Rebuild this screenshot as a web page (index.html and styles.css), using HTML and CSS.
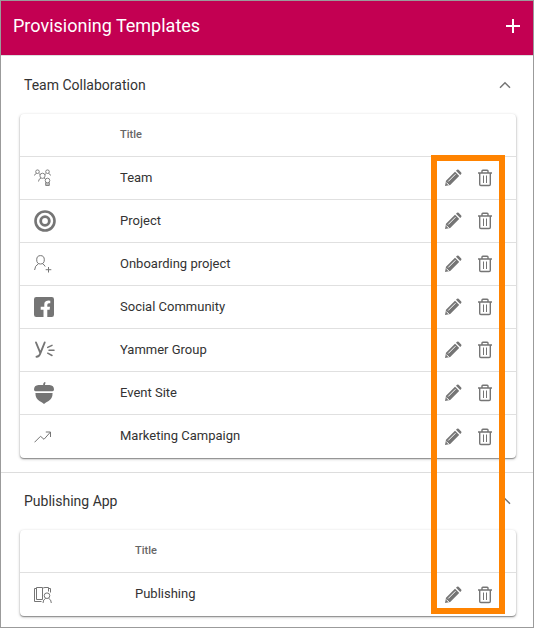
FILE: index.html
```html
<!DOCTYPE html>
<html lang="en">
<head>
<meta charset="utf-8">
<title>Provisioning Templates</title>
<link rel="stylesheet" href="styles.css">
</head>
<body>
<svg class="defs" aria-hidden="true">
  <symbol id="pencil" viewBox="0 0 18 18">
    <path fill="currentColor" d="M1 17l1-5.200L11.200 2.600l4.200 4.200L6.200 16zM12 1.800l1-1q.8-.6 1.600 0l2.600 2.600q.6.800 0 1.600l-1 1z"/>
    <path stroke="#fff" stroke-width="1" fill="none" d="M4.200 12.500L11.500 5.200M2.300 13.500l2.500 2.500M10.800 2l5.200 5.200"/>
  </symbol>
  <symbol id="trash" viewBox="0 0 16 18">
    <path fill="none" stroke="currentColor" stroke-width="1.400" d="M1 4h14M5 4V2q0-.8.800-.8h4.400q.8 0 .8.800v2M2.700 4v11.300q0 1.200 1.200 1.200h8.200q1.200 0 1.200-1.200V4"/>
    <path fill="none" stroke="currentColor" stroke-width="1" d="M6.500 6.500v7.500M9.500 6.500v7.500"/>
  </symbol>
  <symbol id="chevron" viewBox="0 0 12 8">
    <path fill="none" stroke="currentColor" stroke-width="1.500" d="M1 6.700l5-5 5 5"/>
  </symbol>
</svg>
<div class="panel">
  <header class="bar">
    <h1>Provisioning Templates</h1>
    <button class="icon-button add" aria-label="Add template">
      <svg width="14" height="14" viewBox="0 0 14 14"><path stroke="currentColor" stroke-width="2" d="M7 0v14M0 7h14"/></svg>
    </button>
  </header>
  <main>
    <section class="group">
      <div class="group-head">
        <h2>Team Collaboration</h2>
        <button class="icon-button" aria-label="Collapse Team Collaboration" aria-expanded="true"><svg width="12" height="8"><use href="#chevron"/></svg></button>
      </div>
      <table class="card">
        <thead><tr><th class="kind"></th><th>Title</th><th class="actions"></th></tr></thead>
        <tbody>
          <tr>
            <td class="kind"><svg width="18" height="18" viewBox="0 0 18 18" fill="none" stroke="currentColor" stroke-width=".9"><circle cx="3.500" cy="2.700" r="1.800"/><circle cx="13.500" cy="2.700" r="1.800"/><path d="M.5 6.500q.3-1.800 2-2M16.500 6.500q-.3-1.800-2-2M5 4.700l1.200.8M12 4.700l-1.200.8"/><circle cx="8.500" cy="6.800" r="2.600"/><path d="M4.500 12.500q.2-2.700 2.500-3.500M10 9l1.300.8"/><circle cx="13.500" cy="11.500" r="2.300"/><path d="M11.700 13.300v3.200h3.600v-3.200M11.700 15h3.600"/></svg></td>
            <td>Team</td>
            <td class="actions"><button class="icon-button" aria-label="Edit Team"><svg width="18" height="18"><use href="#pencil"/></svg></button><button class="icon-button" aria-label="Delete Team"><svg width="16" height="18"><use href="#trash"/></svg></button></td>
          </tr>
          <tr>
            <td class="kind"><svg width="22" height="22" viewBox="0 0 22 22" fill="none" stroke="currentColor"><circle cx="11" cy="11" r="9.500" stroke-width="2.600"/><circle cx="11" cy="11" r="4.300" stroke-width="2.800"/></svg></td>
            <td>Project</td>
            <td class="actions"><button class="icon-button" aria-label="Edit Project"><svg width="18" height="18"><use href="#pencil"/></svg></button><button class="icon-button" aria-label="Delete Project"><svg width="16" height="18"><use href="#trash"/></svg></button></td>
          </tr>
          <tr>
            <td class="kind"><svg width="18" height="18" viewBox="0 0 18 18" fill="none" stroke="currentColor" stroke-width="1"><ellipse cx="6.500" cy="4.800" rx="3.800" ry="4.200"/><path d="M.6 15q.2-4.300 3.900-6.300M8.500 8.700q1.700.9 2.700 2.800M14.500 12v5.500M11.700 14.700h5.600"/></svg></td>
            <td>Onboarding project</td>
            <td class="actions"><button class="icon-button" aria-label="Edit Onboarding project"><svg width="18" height="18"><use href="#pencil"/></svg></button><button class="icon-button" aria-label="Delete Onboarding project"><svg width="16" height="18"><use href="#trash"/></svg></button></td>
          </tr>
          <tr>
            <td class="kind"><svg width="20" height="20" viewBox="0 0 20 20"><path fill="currentColor" d="M2.200 0h15.600Q20 0 20 2.200v15.600q0 2.200-2.200 2.200h-4.500v-7.300h2.300l.4-3h-2.700V8q0-1.700 1.600-1.700h1.400V3.700q-4-.8-5.400 1.400-.6.900-.6 2.600v2H6.700v3h2.800V20H2.200Q0 20 0 17.800V2.200Q0 0 2.200 0z"/></svg></td>
            <td>Social Community</td>
            <td class="actions"><button class="icon-button" aria-label="Edit Social Community"><svg width="18" height="18"><use href="#pencil"/></svg></button><button class="icon-button" aria-label="Delete Social Community"><svg width="16" height="18"><use href="#trash"/></svg></button></td>
          </tr>
          <tr>
            <td class="kind"><svg width="22" height="18" viewBox="0 0 22 18" fill="none" stroke="currentColor" stroke-width="1.900" stroke-linecap="round"><path d="M2 1.500l4.300 10.300M10.700 1.500L6.400 12.200q-1.200 3.600-3.900 3.600"/><path stroke-width="1.500" d="M13.700 6.400l4.300-2.100M15 9.300h5M13.700 12.200l4.300 2.300"/></svg></td>
            <td>Yammer Group</td>
            <td class="actions"><button class="icon-button" aria-label="Edit Yammer Group"><svg width="18" height="18"><use href="#pencil"/></svg></button><button class="icon-button" aria-label="Delete Yammer Group"><svg width="16" height="18"><use href="#trash"/></svg></button></td>
          </tr>
          <tr>
            <td class="kind"><svg width="20" height="22" viewBox="0 0 20 22" fill="currentColor"><path d="M10.500 0l1.300.7q-.9.900-.9 2.200h4.600Q20 3.200 20 7.500q0 1.700-1.500 1.700h-17Q0 9.200 0 7.500 0 3.200 4.500 2.900h4.600q0-1.600 1.400-2.900zM1.400 11h17.200q0 5.500-4 8-3 1.500-4.600 3-1.600-1.500-4.600-3-4-2.500-4-8z"/></svg></td>
            <td>Event Site</td>
            <td class="actions"><button class="icon-button" aria-label="Edit Event Site"><svg width="18" height="18"><use href="#pencil"/></svg></button><button class="icon-button" aria-label="Delete Event Site"><svg width="16" height="18"><use href="#trash"/></svg></button></td>
          </tr>
          <tr>
            <td class="kind"><svg width="18" height="12" viewBox="0 0 18 12" fill="none" stroke="currentColor" stroke-width="1"><path d="M.5 11.300l6-6 3.500 3L16.500 1M11.800 1h4.700v5"/></svg></td>
            <td>Marketing Campaign</td>
            <td class="actions"><button class="icon-button" aria-label="Edit Marketing Campaign"><svg width="18" height="18"><use href="#pencil"/></svg></button><button class="icon-button" aria-label="Delete Marketing Campaign"><svg width="16" height="18"><use href="#trash"/></svg></button></td>
          </tr>
        </tbody>
      </table>
    </section>
    <section class="group">
      <div class="group-head">
        <h2>Publishing App</h2>
        <button class="icon-button" aria-label="Collapse Publishing App" aria-expanded="true"><svg width="12" height="8"><use href="#chevron"/></svg></button>
      </div>
      <table class="card wide-kind">
        <thead><tr><th class="kind"></th><th>Title</th><th class="actions"></th></tr></thead>
        <tbody>
          <tr>
            <td class="kind"><svg width="18" height="18" viewBox="0 0 18 18" fill="none" stroke="currentColor" stroke-width="1"><path d="M2.500 2.500h-2v13h7M2.500 1.500h6v12h-6zM8.500 2.500q1-1 2.500-1h3.500v4M14.500 2.500h2v4"/><circle cx="13" cy="9.700" r="2.800"/><path d="M9 17q0-3.500 2.700-4.700M17.300 17q0-3.500-2.700-4.700"/></svg></td>
            <td>Publishing</td>
            <td class="actions"><button class="icon-button" aria-label="Edit Publishing"><svg width="18" height="18"><use href="#pencil"/></svg></button><button class="icon-button" aria-label="Delete Publishing"><svg width="16" height="18"><use href="#trash"/></svg></button></td>
          </tr>
        </tbody>
      </table>
    </section>
  </main>
  <div class="highlight"></div>
</div>
</body>
</html>
```
FILE: styles.css
```css
* {
  box-sizing: border-box;
}

body {
  margin: 0;
  background: #fff;
  color: #333;
  font-family: Roboto, sans-serif;
  font-size: 13px;
}

.defs {
  display: none;
}

.panel {
  position: relative;
  min-height: 100vh;
  border: 1px solid #9b9b9b;
}

.bar {
  display: flex;
  align-items: center;
  justify-content: space-between;
  padding: 9px 4px 13px 12px;
  background: #c30052;
  border-bottom: 1px solid #ddd;
  color: #fff;
}

h1 {
  margin: 0;
  font-size: 18px;
  line-height: 32px;
  font-weight: 400;
}

.icon-button {
  display: inline-flex;
  align-items: center;
  justify-content: center;
  width: 32px;
  height: 32px;
  padding: 0;
  border: 0;
  background: none;
  color: #757575;
  vertical-align: middle;
}

.add {
  color: #fff;
}

.group {
  padding: 0 17px 14px 19px;
  border-top: 1px solid #ddd;
}

.group:first-child {
  border-top-color: transparent;
}

.group:last-child {
  padding-bottom: 10px;
}

.group-head {
  display: flex;
  align-items: center;
  justify-content: space-between;
  height: 57px;
  padding: 0 0 2px 4px;
  margin-right: -5px;
}

h2 {
  margin: 0;
  font-size: 14px;
  line-height: 18px;
  font-weight: 400;
}

.card {
  width: 100%;
  border-spacing: 0;
  border-radius: 4px;
  box-shadow: 0 1px 3px rgba(0, 0, 0, 0.3), 0 1px 1px rgba(0, 0, 0, 0.3);
}

th,
td {
  height: 43px;
  padding: 0 0 2px;
  text-align: left;
}

th {
  color: #666;
  font-size: 11px;
  font-weight: 500;
}

th,
tr:not(:last-child) td {
  border-bottom: 1px solid #e0e0e0;
}

.kind {
  width: 100px;
  padding: 0 0 0 14px;
  color: #757575;
}

.wide-kind .kind {
  width: 115px;
}

.kind svg {
  display: block;
}

.actions {
  width: 96px;
  padding: 0 15px 0 0;
  text-align: right;
}

.highlight {
  position: absolute;
  top: 154px;
  right: 28px;
  bottom: 13px;
  width: 74px;
  border: 6px solid #ff8300;
  pointer-events: none;
}
```
